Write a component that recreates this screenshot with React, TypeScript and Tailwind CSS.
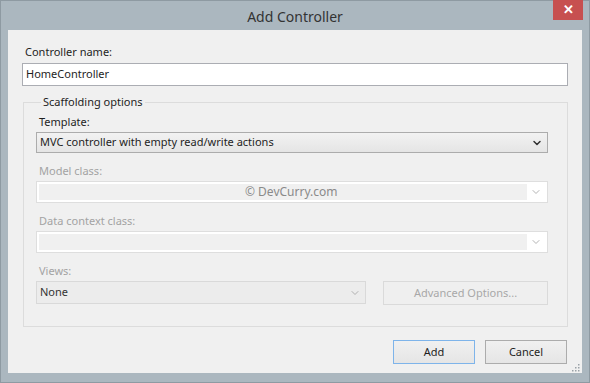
import { ChevronDown } from "lucide-react";

function DisabledCombo() {
  return (
    <div className="mt-[2px] flex h-[22px] border border-[#dedede] bg-white p-[2px]">
      <div className="flex-1 bg-[#f0f0f0]" />
      <div className="flex w-[18px] items-center justify-center">
        <ChevronDown className="h-[12px] w-[12px] text-[#b4b4b4]" strokeWidth={2} />
      </div>
    </div>
  );
}

function Grip() {
  const dots = [
    [8, 2],
    [8, 5],
    [5, 5],
    [8, 8],
    [5, 8],
    [2, 8],
  ];
  return (
    <svg width="10" height="10" viewBox="0 0 10 10" className="absolute right-[2px] bottom-[1px]">
      {dots.map(([x, y], i) => (
        <rect key={i} x={x} y={y} width="1.5" height="1.5" fill="#9aa2a8" />
      ))}
    </svg>
  );
}

export default function App() {
  return (
    <div
      className="flex h-[383px] w-[590px] flex-col border border-[#8e9aa2] bg-[#abb7bf] text-[11px] text-[#1e1e1e]"
      style={{ fontFamily: '"Noto Sans", "Open Sans", sans-serif' }}
    >
      {/* title bar */}
      <div className="relative flex h-[29px] shrink-0 items-center justify-center">
        <span className="pt-[2px] text-[14px] text-[#333]">Add Controller</span>
        <button className="absolute top-[-1px] right-[6px] flex h-[20px] w-[30px] items-center justify-center bg-[#c75050] text-[13px] font-bold text-white">
          ✕
        </button>
      </div>

      {/* client area */}
      <div className="relative mx-[7px] mb-[9px] flex flex-1 flex-col bg-[#f0f0f0] pt-[14px] pr-[14px] pl-[14px]">
        <label className="pl-[3px] leading-[16px]">Controller name:</label>
        <div className="mt-[3px] flex h-[23px] items-center border border-[#abadb3] bg-white pl-[3px]">
          HomeController
        </div>

        <fieldset className="mt-[8px] ml-[1px] border border-[#dcdcdc] pr-[19px] pb-[21px] pl-[12px]">
          <legend className="ml-[5px] px-[2px] leading-[16px]">Scaffolding options</legend>

          <div className="mt-[4px] pl-[3px] leading-[16px]">Template:</div>
          <div className="mt-[2px] flex h-[21px] items-center justify-between border border-[#acacac] bg-gradient-to-b from-[#f2f2f2] to-[#e5e5e5] pr-[4px] pl-[3px]">
            <span>MVC controller with empty read/write actions</span>
            <ChevronDown className="h-[12px] w-[12px] text-[#333]" strokeWidth={3} />
          </div>

          <div className="mt-[10px] pl-[3px] leading-[16px] text-[#a3a3a3]">Model class:</div>
          <DisabledCombo />

          <div className="mt-[10px] pl-[3px] leading-[16px] text-[#a3a3a3]">Data context class:</div>
          <DisabledCombo />

          <div className="mt-[10px] pl-[3px] leading-[16px] text-[#a3a3a3]">Views:</div>
          <div className="mt-[2px] flex gap-[17px]">
            <div className="flex h-[23px] w-[330px] items-center justify-between border border-[#d9d9d9] bg-[#ececec] pr-[4px] pl-[3px]">
              <span className="text-[#333]">None</span>
              <ChevronDown className="h-[12px] w-[12px] text-[#b0b0b0]" strokeWidth={2} />
            </div>
            <div className="flex h-[24px] flex-1 items-center justify-center border border-[#dadada] bg-[#efefef] text-[#a8a8a8]">
              Advanced Options...
            </div>
          </div>
        </fieldset>

        <div className="mt-[13px] flex justify-end gap-[10px] pr-[1px]">
          <button className="h-[24px] w-[82px] border border-[#7eb4ea] bg-gradient-to-b from-[#f0f0f0] to-[#e5e5e5]">
            Add
          </button>
          <button className="h-[24px] w-[82px] border border-[#acacac] bg-gradient-to-b from-[#f0f0f0] to-[#e5e5e5]">
            Cancel
          </button>
        </div>

        <div className="absolute top-[153px] left-[237px] text-[12px] text-[#8a8a8a]">
          © DevCurry.com
        </div>
        <Grip />
      </div>
    </div>
  );
}
